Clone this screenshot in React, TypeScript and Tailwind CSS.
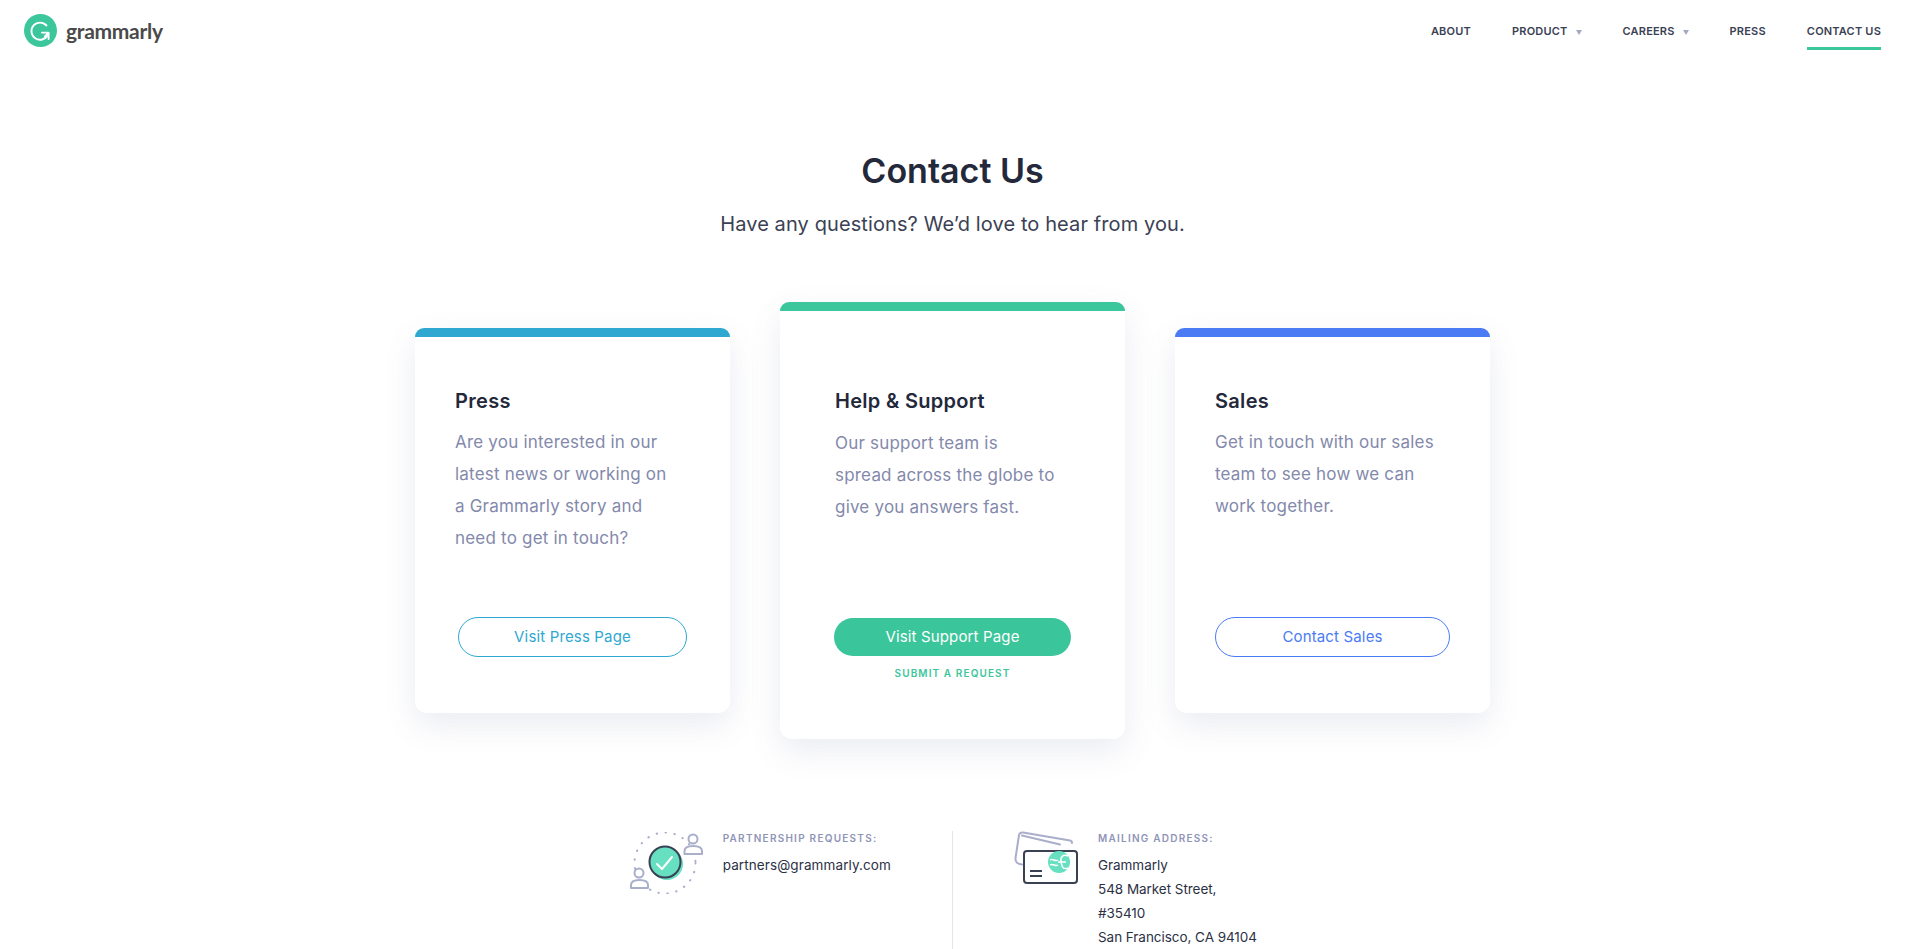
const font = "[font-family:Inter,'Liberation_Sans',sans-serif]";

const Logo = () => (
  <div className="flex items-center gap-[9px] mt-[14px]">
    <svg width="33" height="33" viewBox="0 0 33 33">
      <circle cx="16.5" cy="16.5" r="16.5" fill="#3cc69b" />
      <path d="M22.5 11.5a8.6 8.6 0 1 0 1.2 9.6" fill="none" stroke="#fff" strokeWidth="1.9" strokeLinecap="round" />
      <path d="M18 18.6h6.6v6.4M24.4 18.8l-3.6 3.6" fill="none" stroke="#fff" strokeWidth="1.9" strokeLinecap="round" strokeLinejoin="round" />
    </svg>
    <span className="text-[21px] font-bold tracking-[-0.3px] text-[#4a4a4a] [font-family:Lato,sans-serif]">
      grammarly
    </span>
  </div>
);

const NavItem = ({ label, caret, active }: { label: string; caret?: boolean; active?: boolean }) => (
  <div className={`flex items-center gap-[8px] h-[50px] pt-[15px] border-b-[3px] ${active ? "border-[#3cc69b]" : "border-transparent"}`}>
    <span className="text-[11px] font-semibold tracking-[0.2px] text-[#3b4154]">{label}</span>
    {caret && <span className="mt-[2px] w-0 h-0 border-x-[3px] border-x-transparent border-t-[5px] border-t-[#a3a8c4]" />}
  </div>
);

interface CardProps {
  title: string;
  lines: string[];
  bar: string;
  featured?: boolean;
  children: React.ReactNode;
}

const Card = ({ title, lines, bar, featured, children }: CardProps) => (
  <div className={`flex flex-col bg-white rounded-xl shadow-[0_12px_32px_rgba(90,100,150,0.12)] ${featured ? "w-[345px] h-[437px]" : "w-[315px] h-[385px]"}`}>
    <div className={`h-[9px] rounded-t-xl ${bar}`} />
    <div className={`flex flex-col flex-1 ${featured ? "pt-[76px] pl-[55px]" : "pt-[50px] pl-[40px]"}`}>
      <h3 className="text-[20px] leading-[28px] font-semibold tracking-[0.3px] text-[#23283a]">{title}</h3>
      <div className={`text-[17px] leading-[32px] tracking-[0.2px] text-[#8389ab] ${featured ? "mt-[12px]" : "mt-[11px]"}`}>
        {lines.map((l) => (
          <p key={l}>{l}</p>
        ))}
      </div>
    </div>
    {children}
  </div>
);

export default function App() {
  return (
    <div className={`h-[949px] overflow-hidden bg-white ${font}`}>
      <header className="flex items-start justify-between h-[50px] px-6">
        <Logo />
        <nav className="flex items-center gap-[41px]">
          <NavItem label="ABOUT" />
          <NavItem label="PRODUCT" caret />
          <NavItem label="CAREERS" caret />
          <NavItem label="PRESS" />
          <NavItem label="CONTACT US" active />
        </nav>
      </header>

      <main className="flex flex-col items-center">
        <h1 className="mt-[97px] text-[34px] leading-[48px] font-semibold text-[#23283a]">Contact Us</h1>
        <p className="mt-[15px] text-[20px] leading-[28px] tracking-[0.1px] text-[#3b4154]">Have any questions? We’d love to hear from you.</p>

        <div className="mt-[64px] flex items-center gap-[50px]">
          <Card title="Press" bar="bg-[#2ea8d1]" lines={["Are you interested in our", "latest news or working on", "a Grammarly story and", "need to get in touch?"]}>
            <div className="pb-[56px] pl-[43px]">
              <a className="flex items-center justify-center w-[229px] h-[40px] rounded-full border border-[#2ea8d1] text-[15px] tracking-[0.15px] text-[#2ea8d1]">Visit Press Page</a>
            </div>
          </Card>
          <Card featured title="Help & Support" bar="bg-[#3cc69b]" lines={["Our support team is", "spread across the globe to", "give you answers fast."]}>
            <div className="flex flex-col items-center pb-[58px]">
              <a className="flex items-center justify-center w-[237px] h-[38px] rounded-full bg-[#3ac59a] text-[15px] tracking-[0.15px] text-white">Visit Support Page</a>
              <a className="mt-[9px] text-[10px] leading-[16px] font-semibold tracking-[1.1px] text-[#3cc69b]">SUBMIT A REQUEST</a>
            </div>
          </Card>
          <Card title="Sales" bar="bg-[#4a7bf5]" lines={["Get in touch with our sales", "team to see how we can", "work together."]}>
            <div className="pb-[56px] pl-[40px]">
              <a className="flex items-center justify-center w-[235px] h-[40px] rounded-full border border-[#4a7bf5] text-[15px] tracking-[0.15px] text-[#4a7bf5]">Contact Sales</a>
            </div>
          </Card>
        </div>

        <div className="mt-[92px] w-full grid grid-cols-[1fr_1px_1fr]">
          <div className="flex justify-end pr-[61px] gap-[18px]">
            <svg width="75" height="62" viewBox="0 0 75 62" className="shrink-0 mt-px">
              <circle cx="35" cy="31" r="30.500" fill="none" stroke="#a9aecb" strokeWidth="2" strokeDasharray="0.5 8.500" strokeLinecap="round" />
              <circle cx="37" cy="32" r="16" fill="#66e0c0" />
              <circle cx="35" cy="30" r="15.500" fill="#66e0c0" stroke="#3b4154" strokeWidth="2" />
              <path d="M27 32l5 5 10-12" fill="none" stroke="#fff" strokeWidth="2" strokeLinecap="round" strokeLinejoin="round" />
              <g fill="#fff" stroke="#a9aecb" strokeWidth="2">
                <circle cx="63" cy="7" r="4.500" />
                <path d="M54.500 22v-3c0-3 3-5 8.500-5s9 2 9 5v3z" strokeLinejoin="round" />
                <circle cx="9" cy="41" r="4.500" />
                <path d="M1 56v-3c0-3 3-5 8.500-5s8.500 2 8.500 5v3z" strokeLinejoin="round" />
              </g>
            </svg>
            <div>
              <p className="text-[10px] leading-[14px] font-semibold tracking-[1.25px] text-[#9095b8]">PARTNERSHIP REQUESTS:</p>
              <p className="mt-[8px] text-[13.5px] leading-[24px] tracking-[0.1px] text-[#2c3145]">partners@grammarly.com</p>
            </div>
          </div>
          <div className="w-px h-[120px] bg-[#e4e5ec]" />
          <div className="flex pl-[61px] gap-[18px]">
            <svg width="66" height="54" viewBox="0 0 66 54" className="shrink-0">
              <path d="M8 33.500Q1 33 1.500 27L5 4Q6 1 9 1.500L56 9.500Q58 10 58 12" fill="none" stroke="#a9aecb" strokeWidth="2" strokeLinecap="round" />
              <path d="M8 4.500L46 13.500" fill="none" stroke="#a9aecb" strokeWidth="2" strokeLinecap="round" />
              <rect x="10" y="20" width="53" height="32" rx="3" fill="#fff" stroke="#3b4154" strokeWidth="2" />
              <circle cx="45" cy="31" r="11" fill="#66e0c0" />
              <path d="M36 29c3-2 5 2 8 0M36 34c3-2 5 2 8 0M54 25c-5-2-8 1-7 6s2 8 7 6M44 31h8" fill="none" stroke="#fff" strokeWidth="1.500" />
              <path d="M16 40h12M16 45h12" stroke="#3b4154" strokeWidth="2" />
            </svg>
            <div>
              <p className="text-[10px] leading-[14px] font-semibold tracking-[1.25px] text-[#9095b8]">MAILING ADDRESS:</p>
              <div className="mt-[8px] text-[13.5px] leading-[24px] tracking-[-0.05px] text-[#2c3145]">
                <p>Grammarly</p>
                <p>548 Market Street,</p>
                <p>#35410</p>
                <p>San Francisco, CA 94104</p>
              </div>
            </div>
          </div>
        </div>
      </main>
    </div>
  );
}
